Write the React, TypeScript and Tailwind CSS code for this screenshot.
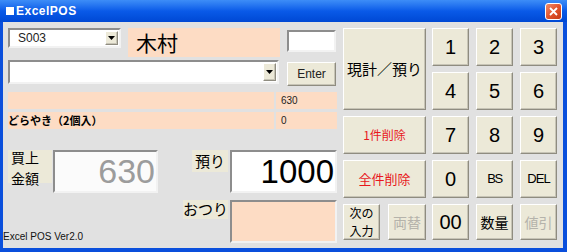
import React from 'react';

const jp = "font-['Noto_Sans_CJK_JP',sans-serif]";
const ar = "font-['Liberation_Sans','Noto_Sans_CJK_JP',sans-serif]";

const raised =
    'bg-[#ece9d8] border border-t-white border-l-white border-r-[#8f8c80] border-b-[#8f8c80] shadow-[inset_-1px_-1px_0_#c7c4b6]';
const sunken =
    'border-2 border-t-[#8d8d8d] border-l-[#8d8d8d] border-b-[#f2f2f2] border-r-[#f2f2f2]';

const Btn: React.FC<{ className?: string; children?: React.ReactNode }> = ({ className = '', children }) => (
    <div className={`flex items-center justify-center ${raised} ${className}`}>{children}</div>
);

const Arrow = () => (
    <div className={`flex h-full w-[13px] items-center justify-center ${raised}`}>
        <svg width="7" height="4" viewBox="0 0 7 4">
            <path d="M0 0h7L3.5 4z" fill="#000" />
        </svg>
    </div>
);

const Combo: React.FC<{ className?: string; text?: string }> = ({ className = '', text }) => (
    <div className={`flex items-stretch bg-white ${sunken} ${className}`}>
        <div className={`flex-1 pl-2 text-[12px] leading-[16px] text-[#222] ${ar}`}>{text}</div>
        <div className="py-[1px] pr-[1px]">
            <Arrow />
        </div>
    </div>
);

export default function App() {
    return (
        <div className="flex h-[252px] w-[567px] flex-col bg-[#0a4fdc]">
            {/* title bar */}
            <div className="flex h-[22px] items-center bg-gradient-to-b from-[#3d8df7] via-[#0a5ae8] to-[#0048d4] pl-[6px] pr-[5px]">
                <div className="h-[8px] w-[8px] bg-white" />
                <span className={`ml-[2px] text-[12px] font-bold tracking-[0.5px] text-white ${ar}`}>ExcelPOS</span>
                <div className="ml-auto flex h-[17px] w-[17px] items-center justify-center rounded-[3px] border border-white bg-gradient-to-br from-[#f08a6a] via-[#e2542c] to-[#c53a14]">
                    <svg width="9" height="9" viewBox="0 0 9 9">
                        <path d="M1 1l7 7M8 1L1 8" stroke="#fff" strokeWidth="1.8" />
                    </svg>
                </div>
            </div>

            {/* client */}
            <div className="mx-[3px] mb-[4px] mr-[4px] flex flex-1 bg-[#e1e1e1] pt-[6px]">
                {/* left column */}
                <div className="flex w-[340px] flex-col">
                    <div className="flex pl-[5px]">
                        <Combo className="h-[20px] w-[113px]" text="S003" />
                        <div className={`ml-[7px] flex h-[29px] w-[152px] items-center bg-[#fddcc4] pl-[8px] text-[21px] text-black ${jp}`}>
                            木村
                        </div>
                        <div className={`ml-[7px] mt-[2px] h-[22px] w-[49px] bg-white ${sunken}`} />
                    </div>
                    <div className="mt-[3px] flex pl-[5px]">
                        <Combo className="h-[24px] w-[271px]" />
                        <Btn className={`ml-[8px] mt-[2px] h-[24px] w-[49px] text-[12px] text-[#222] ${ar}`}>Enter</Btn>
                    </div>

                    {/* list */}
                    <div className="mt-[6px] ml-[5px] flex w-[329px] flex-col gap-[3px]">
                        <div className="flex h-[17px] gap-[2px]">
                            <div className="w-[266px] bg-[#fddcc4]" />
                            <div className={`flex flex-1 items-center bg-[#fddcc4] pl-[5px] text-[10px] text-[#222] ${ar}`}>630</div>
                        </div>
                        <div className="flex h-[17px] gap-[2px]">
                            <div className={`flex w-[266px] items-center bg-[#fddcc4] text-[11px] font-bold text-black ${jp}`}>
                                どらやき（2個入）
                            </div>
                            <div className={`flex flex-1 items-center bg-[#fddcc4] pl-[5px] text-[10px] text-[#222] ${ar}`}>0</div>
                        </div>
                    </div>

                    {/* totals */}
                    <div className="mt-[21px] flex pl-[5px]">
                        <div className="flex flex-col">
                            <div className="flex items-start">
                                <div className={`h-[33px] w-[44px] bg-[#ece9d8] pl-[3px] text-[14px] leading-[20.5px] text-black ${jp}`}>
                                    <div className="-mt-[3px]">買上</div>
                                    <div>金額</div>
                                </div>
                                <div className={`ml-[1px] flex h-[43px] w-[105px] items-center justify-end bg-[#fbfbfb] pr-[1px] text-[34px] text-[#9c9c9c] ${ar} ${sunken}`}>
                                    630
                                </div>
                            </div>
                            <div className={`-ml-[5px] mt-auto pb-[1px] text-[10px] leading-none text-[#111] ${ar}`}>Excel POS Ver2.0</div>
                        </div>
                        <div className="ml-auto flex flex-col gap-[7px] pr-[6px]">
                            <div className="flex items-start justify-end">
                                <div className={`mr-[2px] flex h-[22px] w-[36px] items-center justify-center bg-[#ece9d8] text-[15px] text-black ${jp}`}>
                                    預り
                                </div>
                                <div className={`flex h-[43px] w-[107px] items-center justify-end bg-white pr-[1px] text-[33px] text-black ${ar} ${sunken}`}>
                                    1000
                                </div>
                            </div>
                            <div className="flex items-start justify-end">
                                <div className={`mr-[2px] flex h-[19px] w-[45px] items-center justify-center bg-[#ece9d8] text-[15px] text-black ${jp}`}>
                                    おつり
                                </div>
                                <div className={`h-[43px] w-[107px] bg-[#fddcc4] ${sunken}`} />
                            </div>
                        </div>
                    </div>
                </div>

                {/* keypad */}
                <div className="flex gap-[6px]">
                    <div className="flex w-[83px] flex-col gap-[6px]">
                        <Btn className={`h-[82px] text-[15px] text-black ${jp}`}>現計／預り</Btn>
                        <Btn className={`h-[38px] text-[12px] text-[#e8181c] ${jp}`}>1件削除</Btn>
                        <Btn className={`h-[38px] text-[13px] text-[#e8181c] ${jp}`}>全件削除</Btn>
                        <div className="flex h-[36px] justify-between">
                            <Btn className={`w-[37px] flex-col text-[12px] leading-[18px] text-black ${jp}`}>
                                <div>次の</div>
                                <div>入力</div>
                            </Btn>
                            <Btn className={`w-[38px] text-[14px] text-[#b5b3ab] ${jp}`}>両替</Btn>
                        </div>
                    </div>
                    <div className="grid grid-cols-[37px_37px_37px] grid-rows-[38px_38px_38px_38px_36px] gap-x-[7px] gap-y-[6px]">
                        {['1', '2', '3', '4', '5', '6', '7', '8', '9', '0'].map(d => (
                            <Btn key={d} className={`text-[20px] text-black ${ar}`}>{d}</Btn>
                        ))}
                        <Btn className={`text-[13px] tracking-[-1.5px] text-black ${ar}`}>BS</Btn>
                        <Btn className={`text-[13px] tracking-[-1px] text-black ${ar}`}>DEL</Btn>
                        <Btn className={`text-[20px] text-black ${ar}`}>00</Btn>
                        <Btn className={`text-[14px] text-black ${jp}`}>数量</Btn>
                        <Btn className={`text-[14px] text-[#b5b3ab] ${jp}`}>値引</Btn>
                    </div>
                </div>
            </div>
        </div>
    );
}
